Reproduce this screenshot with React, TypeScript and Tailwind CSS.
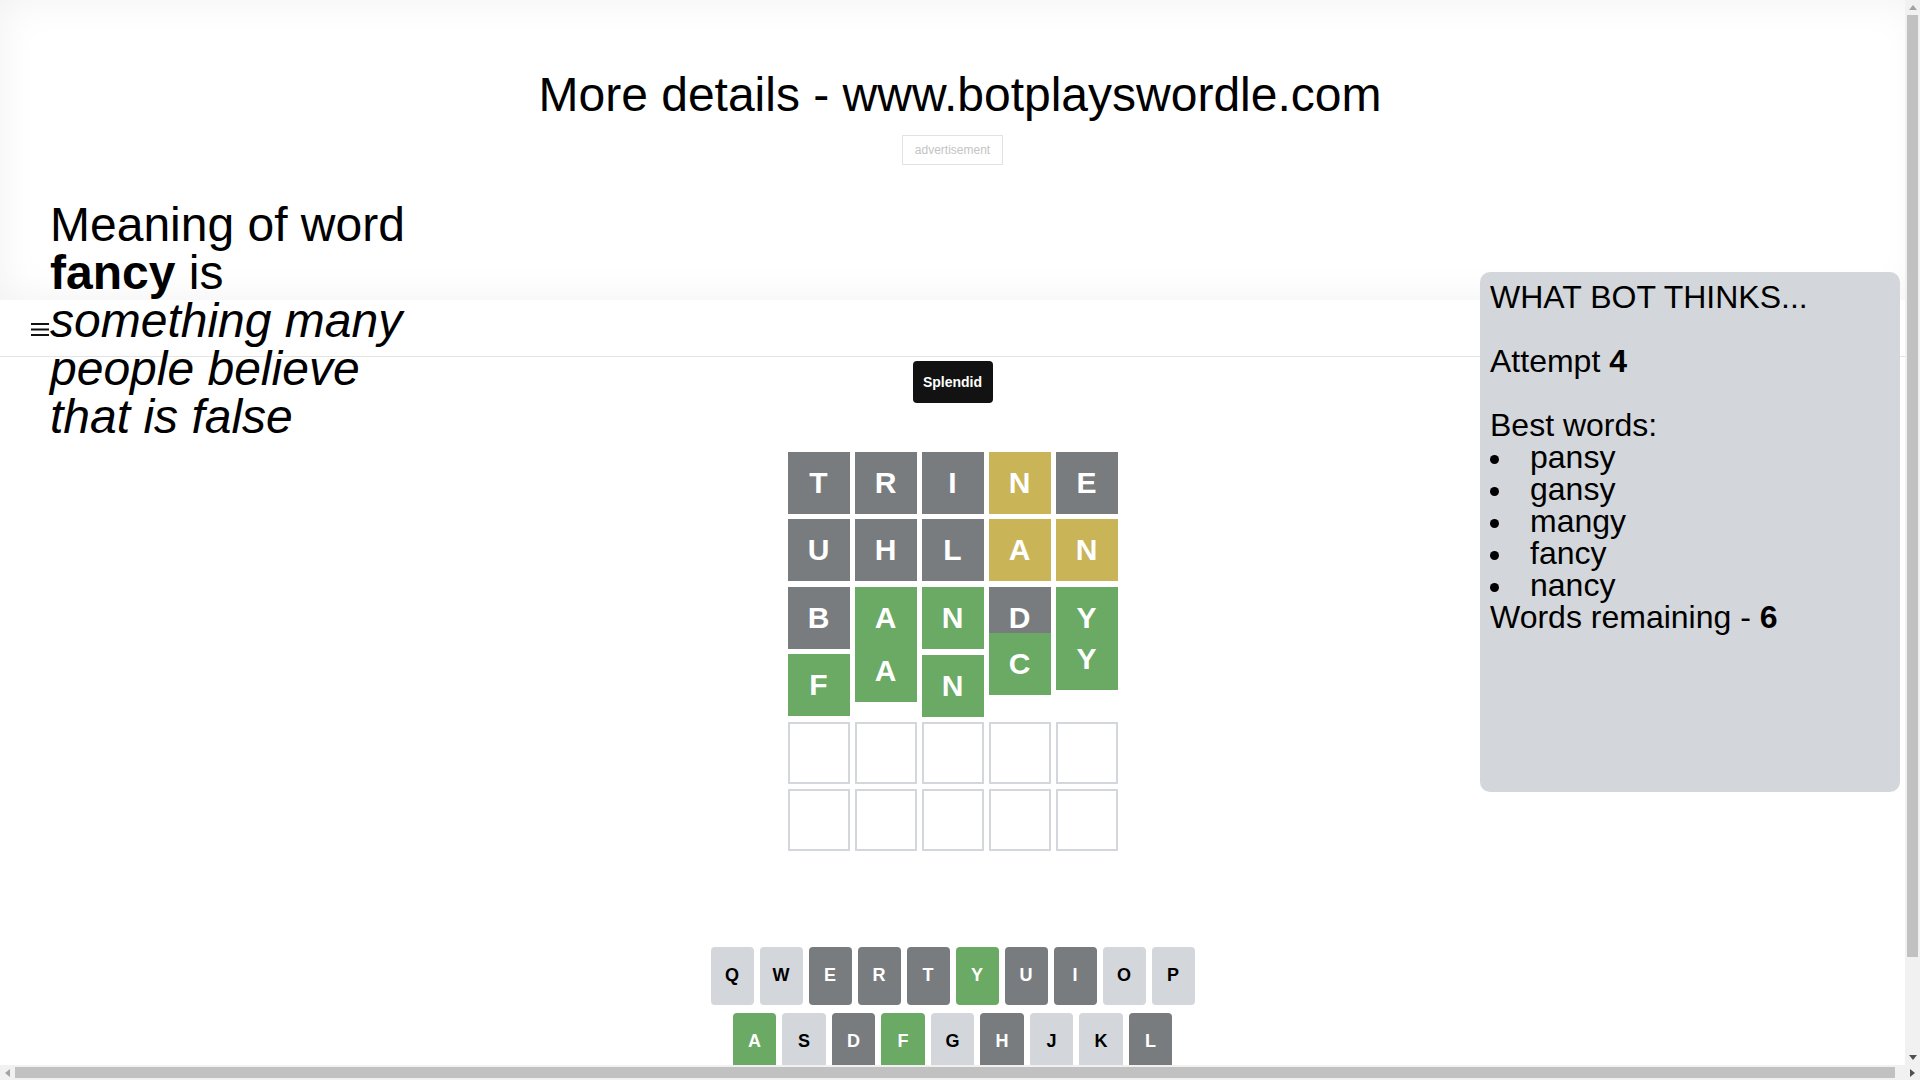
import React from 'react'

type Tone = 'x' | 'y' | 'g' | 'e'

const toneTile: Record<Tone, string> = {
  x: 'bg-[#787c7e] text-white',
  y: 'bg-[#c9b458] text-white',
  g: 'bg-[#6aaa64] text-white',
  e: 'bg-white border-2 border-[#d3d6da]',
}

const board: [string, Tone][][] = [
  [['T', 'x'], ['R', 'x'], ['I', 'x'], ['N', 'y'], ['E', 'x']],
  [['U', 'x'], ['H', 'x'], ['L', 'x'], ['A', 'y'], ['N', 'y']],
  [['B', 'x'], ['A', 'g'], ['N', 'g'], ['D', 'x'], ['Y', 'g']],
  [['F', 'g'], ['A', 'g'], ['N', 'g'], ['C', 'g'], ['Y', 'g']],
  [['', 'e'], ['', 'e'], ['', 'e'], ['', 'e'], ['', 'e']],
  [['', 'e'], ['', 'e'], ['', 'e'], ['', 'e'], ['', 'e']],
]

// row 4 is caught mid-bounce
const bounce = ['', '-translate-y-[14px]', 'translate-y-[1px]', '-translate-y-[21px]', '-translate-y-[26px]']

type KeyTone = 'l' | 'd' | 'g'
const toneKey: Record<KeyTone, string> = {
  l: 'bg-[#d3d6da] text-black',
  d: 'bg-[#787c7e] text-white',
  g: 'bg-[#6aaa64] text-white',
}

const keys: [string, KeyTone][][] = [
  [['Q', 'l'], ['W', 'l'], ['E', 'd'], ['R', 'd'], ['T', 'd'], ['Y', 'g'], ['U', 'd'], ['I', 'd'], ['O', 'l'], ['P', 'l']],
  [['A', 'g'], ['S', 'l'], ['D', 'd'], ['F', 'g'], ['G', 'l'], ['H', 'd'], ['J', 'l'], ['K', 'l'], ['L', 'd']],
  [['ENTER', 'l'], ['Z', 'l'], ['X', 'l'], ['C', 'g'], ['V', 'l'], ['B', 'd'], ['N', 'g'], ['M', 'l'], ['⌫', 'l']],
]

const bestWords = ['pansy', 'gansy', 'mangy', 'fancy', 'nancy']

function Tile({ letter, tone, shift }: { letter: string; tone: Tone; shift?: string }) {
  return (
    <div
      className={`w-[62px] h-[62px] flex items-center justify-center text-[30px] font-bold leading-none ${toneTile[tone]} ${shift ?? ''}`}
    >
      {letter}
    </div>
  )
}

function Arrow({ dir, color }: { dir: 'up' | 'down' | 'left' | 'right'; color: string }) {
  const pts = {
    up: '4,1 8,6 0,6',
    down: '0,1 8,1 4,6',
    left: '6,0 6,8 1,4',
    right: '1,0 1,8 6,4',
  }[dir]
  return (
    <div className="w-[15px] h-[15px] flex items-center justify-center shrink-0">
      <svg width="8" height="8" viewBox="0 0 8 8">
        <polygon points={pts} fill={color} />
      </svg>
    </div>
  )
}

export default function App() {
  return (
    <div className="h-screen w-screen flex flex-col overflow-hidden bg-white text-black font-['Liberation_Sans',Arial,sans-serif]">
      <div className="flex flex-1 min-h-0">
        <div className="relative flex-1 min-w-0 overflow-hidden">
          {/* top banner */}
          <section className="w-[1920px] h-[300px] shadow-[inset_0_0_40px_rgba(0,0,0,0.06)] flex flex-col items-center pt-[67px]">
            <h1 className="text-[48px] leading-[55px] font-normal">More details - www.botplayswordle.com</h1>
            <div className="mt-[13px] mr-[15px] border border-[#e2e2e2] px-[12px] py-[7px] text-[12px] leading-[14px] text-[#c4c4c4]">
              advertisement
            </div>
          </section>

          {/* header bar */}
          <header className="h-[57px] border-b border-[#e4e4e4] flex items-center pl-[31px]">
            <svg width="18" height="13" viewBox="0 0 18 13" className="mt-[2px]">
              <rect x="0" y="0" width="18" height="2" fill="#111" />
              <rect x="0" y="5.5" width="18" height="2" fill="#111" />
              <rect x="0" y="11" width="18" height="2" fill="#111" />
            </svg>
          </header>

          {/* game */}
          <main className="flex flex-col items-center">
            <div className="mt-[4px] w-[80px] h-[42px] rounded-[4px] bg-[#121212] text-white text-[14px] font-bold flex items-center justify-center">
              Splendid
            </div>

            <div className="mt-[49px] flex flex-col gap-[5.4px]">
              {board.map((row, r) => (
                <div key={r} className="flex gap-[5px]">
                  {row.map(([letter, tone], c) => (
                    <Tile key={c} letter={letter} tone={tone} shift={r === 3 ? bounce[c] : undefined} />
                  ))}
                </div>
              ))}
            </div>

            <div className="mt-[96px] pb-[33px] flex flex-col items-center gap-[8px]">
              {keys.map((row, r) => (
                <div key={r} className="flex gap-[6px]">
                  {row.map(([k, tone]) => (
                    <button
                      key={k}
                      className={`h-[58px] rounded-[4px] flex items-center justify-center font-bold ${
                        k.length > 1 ? 'w-[65px] text-[12px]' : r === 1 ? 'w-[43.5px] text-[18px]' : 'w-[43px] text-[18px]'
                      } ${toneKey[tone]}`}
                    >
                      {k}
                    </button>
                  ))}
                </div>
              ))}
            </div>
          </main>

          {/* word meaning, floats over the banner */}
          <div className="absolute left-[50px] top-[201px] w-[380px] text-[48px] leading-[48px]">
            Meaning of word <b>fancy</b> is <i>something many people believe that is false</i>
          </div>

          {/* bot panel */}
          <aside className="absolute left-[1480px] top-[272px] w-[420px] h-[520px] rounded-[10px] bg-[#d3d6da] pl-[10px] pt-[9px] text-[32px] leading-[32px]">
            WHAT BOT THINKS...
            <br />
            <br />
            Attempt <b>4</b>
            <br />
            <br />
            Best words:
            <ul>
              {bestWords.map(w => (
                <li key={w} className="flex items-start">
                  <span className="w-[40px] shrink-0 pt-[14px]">
                    <span className="block w-[9px] h-[9px] rounded-full bg-black" />
                  </span>
                  {w}
                </li>
              ))}
            </ul>
            Words remaining - <b>6</b>
          </aside>
        </div>

        {/* vertical scrollbar */}
        <div className="w-[15px] bg-[#f1f1f1] flex flex-col">
          <Arrow dir="up" color="#a3a3a3" />
          <div className="mx-[2px] h-[942px] bg-[#c1c1c1]" />
          <div className="flex-1" />
          <Arrow dir="down" color="#505050" />
        </div>
      </div>

      {/* horizontal scrollbar */}
      <div className="h-[15px] bg-[#f1f1f1] flex items-center">
        <Arrow dir="left" color="#a3a3a3" />
        <div className="h-[11px] w-[1880px] bg-[#c1c1c1]" />
        <div className="flex-1" />
        <Arrow dir="right" color="#505050" />
      </div>
    </div>
  )
}
